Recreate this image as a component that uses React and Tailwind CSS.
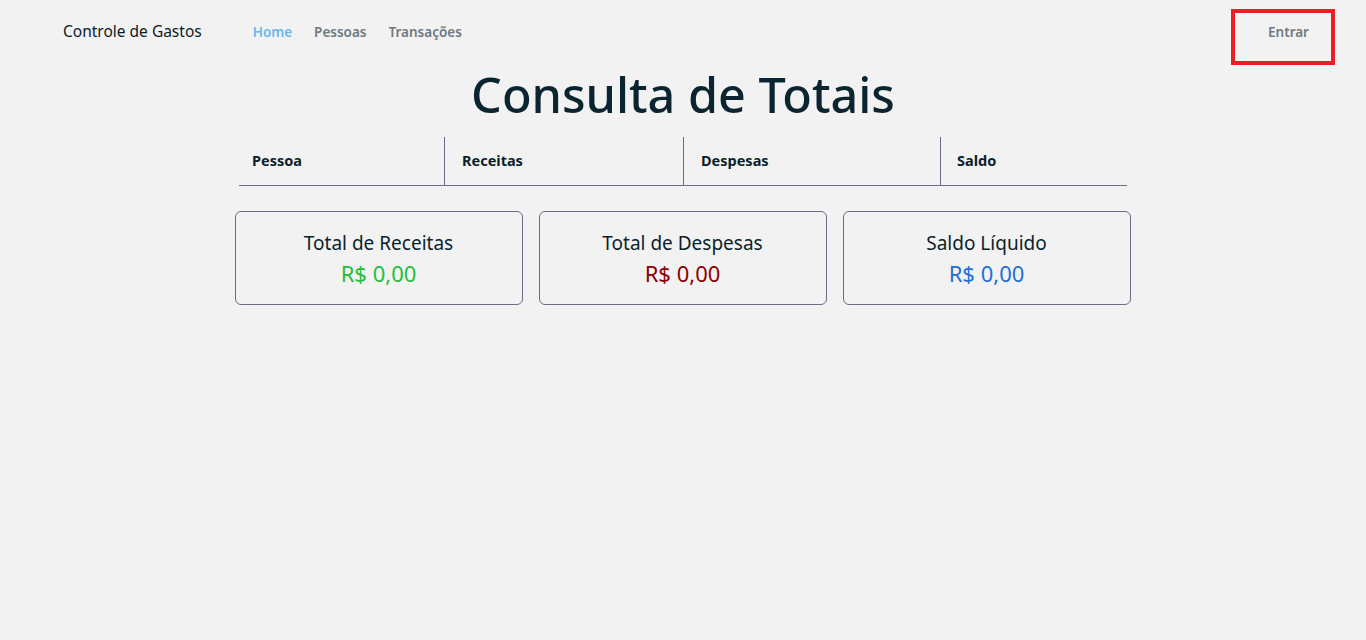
import React from "react";

const font = { fontFamily: '"Noto Sans", "Open Sans", Arial, sans-serif' };

function Navbar() {
    return (
        <nav className="h-[64px] flex items-center pl-[63px] pr-[31px]">
            <span className="text-[15.5px] text-[#0d1b24] mr-[51px]">Controle de Gastos</span>
            {/* links */}
            <div className="flex items-center gap-[22px] text-[13.5px] font-semibold">
                <a className="text-[#6ab7f2]">Home</a>
                <a className="text-[#6f7a80]">Pessoas</a>
                <a className="text-[#6f7a80]">Transações</a>
            </div>
            <div className="ml-auto mt-[10px] w-[104px] h-[56px] border-4 border-[#ee1c25] flex items-start pt-[9px] pl-[33px]">
                <span className="text-[13.5px] font-semibold text-[#6f7a80]">Entrar</span>
            </div>
        </nav>
    );
}

function TotalCard({ title, value, color }) {
    return (
        <div className="w-[288px] h-[94px] border border-[#6c6c88] rounded-[6px] flex flex-col items-center justify-center pt-[4px]">
            <p className="text-[19px] leading-[27px] text-[#0b1f2a]">{title}</p>
            <p className={"text-[22px] leading-[33px] " + color}>{value}</p>
        </div>
    );
}

export default function App() {
    return (
        <div className="min-h-screen w-full bg-[#f2f2f2]" style={font}>
            <Navbar />

            <h1 className="text-center text-[48.5px] leading-[60px] h-[60px] font-medium text-[#0b2530]">Consulta de Totais</h1>

            {/* tabela */}
            <div className="flex justify-center mt-[13px]">
                <div className="w-[888px] grid grid-cols-[206px_239px_257px_186px] h-[49px] border-b border-[#6c6c80] text-[14.5px] font-bold text-[#0b1f2a]">
                    <div className="flex items-center pl-[13px] border-r border-[#6c6c80]">Pessoa</div>
                    <div className="flex items-center pl-[17px] border-r border-[#6c6c80]">Receitas</div>
                    <div className="flex items-center pl-[17px] border-r border-[#6c6c80]">Despesas</div>
                    <div className="flex items-center pl-[16px]">Saldo</div>
                </div>
            </div>

            {/* cards */}
            <div className="flex justify-center gap-[16px] mt-[25px] pr-[1px]">
                <TotalCard title="Total de Receitas" value="R$ 0,00" color="text-[#22c03a]" />
                <TotalCard title="Total de Despesas" value="R$ 0,00" color="text-[#8b0000]" />
                <TotalCard title="Saldo Líquido" value="R$ 0,00" color="text-[#1e6fd9]" />
            </div>
        </div>
    );
}
